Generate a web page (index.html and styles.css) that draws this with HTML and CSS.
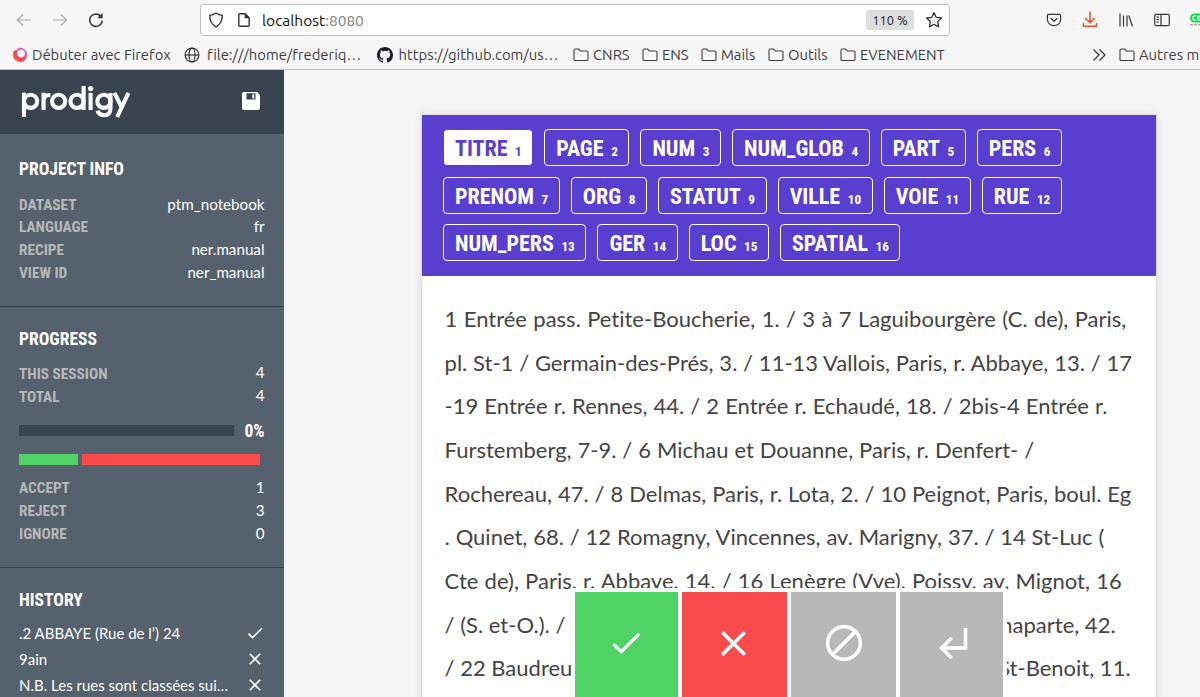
FILE: index.html
```
<!DOCTYPE html>
<html lang="fr">
<head>
<meta charset="utf-8">
<title>Prodigy</title>
<link rel="stylesheet" href="styles.css">
</head>
<body>
<svg class="defs" width="0" height="0">
  <symbol id="folder" viewBox="0 0 16 16"><path d="M1 12.5V3.3Q1 2 2.3 2H5.5L7.4 4H13.7Q15 4 15 5.3V12.2Q15 13.5 13.7 13.5H2.3Q1 13.5 1 12.5Z" fill="none" stroke="#3d3d3f" stroke-width="1.1"/></symbol>
  <symbol id="check" viewBox="0 0 24 24"><path d="M9 16.17L4.83 12l-1.42 1.41L9 19 21 7l-1.41-1.41z" fill="#fff"/></symbol>
  <symbol id="cross" viewBox="0 0 24 24"><path d="M19 6.41L17.59 5 12 10.59 6.41 5 5 6.41 10.59 12 5 17.59 6.41 19 12 13.41 17.59 19 19 17.59 13.41 12z" fill="#fff"/></symbol>
</svg>
<header class="browser">
  <div class="toolbar">
    <div class="nav">
      <svg width="16" height="16" viewBox="0 0 16 16" class="dim"><path d="M15 8H1.5M7 2.5L1.5 8 7 13.5"/></svg>
      <svg width="16" height="16" viewBox="0 0 16 16" class="dim"><path d="M1 8H14.5M9 2.5L14.5 8 9 13.5"/></svg>
      <svg width="16" height="16" viewBox="0 0 16 16" class="ink"><path d="M13.2 4.6A6.3 6.3 0 1 0 14.3 8.6" stroke-width="1.5"/><path d="M14.6 1V6.3H9.3Z" fill="#333" stroke="none"/></svg>
    </div>
    <div class="urlbar">
      <svg width="16" height="16" viewBox="0 0 16 16" class="ink"><path d="M8 1Q10.8 3 14.2 3.4Q14.6 11 8 15Q1.4 11 1.8 3.4Q5.2 3 8 1Z" stroke-width="1.4"/></svg>
      <svg width="16" height="16" viewBox="0 0 16 16" class="ink page"><path d="M3.8 1.7H9L13.2 5.9V13.3Q13.2 14.3 12.2 14.3H3.8Q2.8 14.3 2.8 13.3V2.7Q2.8 1.7 3.8 1.7Z" stroke-width="1.4"/><path d="M8.6 1.4V6.3H13.4Z" fill="#333" stroke="none"/></svg>
      <span class="url">localhost<span>:8080</span></span>
      <span class="zoom">110 %</span>
      <svg width="18" height="18" viewBox="0 0 18 18" class="ink"><path d="M9 1.6L11.2 6.3 16.5 7 12.7 10.6 13.6 15.9 9 13.3 4.4 15.9 5.3 10.6 1.5 7 6.8 6.3Z" stroke-width="1.3" stroke-linejoin="round"/></svg>
    </div>
    <div class="tools">
      <svg width="16" height="16" viewBox="0 0 16 16" class="ink"><path d="M2.5 2.3H13.5Q14.6 2.3 14.6 3.5V7.5A6.6 6.2 0 0 1 1.4 7.5V3.5Q1.4 2.3 2.5 2.3ZM4.7 6.2L8 9.2 11.3 6.2"/></svg>
      <svg width="16" height="18" viewBox="0 0 16 18" class="orange"><path d="M8 1V11.5M3.8 7.5L8 11.7 12.2 7.5M1.5 12.5V15.2H14.5V12.5"/></svg>
      <svg width="16" height="16" viewBox="0 0 16 16" class="ink"><path d="M2 1.5V14.5M5.5 3.5V14.5M9 3.5V14.5M10.8 3.5L14.5 14.5" stroke-width="1.2"/></svg>
      <svg width="16" height="16" viewBox="0 0 16 16" class="ink"><rect x="0.7" y="2.3" width="14.6" height="11.4" rx="1.5"/><path d="M7 2.3V13.7M2.5 5H5M2.5 7.5H5M2.5 10H5"/></svg>
      <svg width="11" height="16" viewBox="0 0 11 16" class="ext"><rect x="0" y="1.5" width="20" height="9" rx="4.5" fill="#08e04a"/><path d="M6 4Q2.6 3.5 2.7 6Q2.8 8.5 6 8M11 4H8V8H11M8 6H11" fill="none" stroke="#fff" stroke-width="1.2"/><path d="M0 12.8H11" stroke="#888" stroke-dasharray="3 1"/></svg>
    </div>
  </div>
  <nav class="bookmarks">
    <a class="b1"><svg width="16" height="16" viewBox="0 0 16 16"><defs><linearGradient id="fx" x1="1" y1="0" x2="0" y2="1"><stop offset="0" stop-color="#9059ff"/><stop offset=".35" stop-color="#ff4aa2"/><stop offset=".65" stop-color="#ff3750"/><stop offset="1" stop-color="#ffbd2b"/></linearGradient></defs><path fill-rule="evenodd" d="M8 .8A7.2 7.2 0 1 1 .8 8Q.9 4.6 3 2.8Q3.6 3.2 4.2 3.6Q5.8 .9 8 .8ZM9 2.4A4.1 4.1 0 1 0 9.01 2.4Z" fill="url(#fx)"/></svg><span>Débuter avec Firefox</span></a>
    <a class="b2"><svg width="16" height="16" viewBox="0 0 16 16" class="ink"><circle cx="8" cy="8" r="6.9"/><ellipse cx="8" cy="8" rx="3" ry="6.9"/><path d="M1.1 8H14.9"/></svg><span>file:///home/frederiq…</span></a>
    <a class="b3"><svg width="16" height="16" viewBox="0 0 16 16"><path fill="#1b1f23" d="M8 0C3.58 0 0 3.58 0 8c0 3.54 2.29 6.53 5.47 7.59.4.07.55-.17.55-.38v-1.49c-2.01.37-2.53-.49-2.69-.94-.09-.23-.48-.94-.82-1.13-.28-.15-.68-.52-.01-.53.63-.01 1.08.58 1.23.82.72 1.21 1.87.87 2.33.66.07-.52.28-.87.51-1.07-1.78-.2-3.64-.89-3.64-3.95 0-.87.31-1.59.82-2.15-.08-.2-.36-1.02.08-2.12 0 0 .67-.21 2.2.82a7.7 7.7 0 0 1 4 0c1.53-1.04 2.2-.82 2.2-.82.44 1.1.16 1.92.08 2.12.51.56.82 1.27.82 2.15 0 3.07-1.87 3.75-3.65 3.95.29.25.54.73.54 1.48v2.2c0 .21.15.46.55.38A8 8 0 0 0 16 8c0-4.42-3.58-8-8-8z"/></svg><span>https://github.com/us…</span></a>
    <a class="b4"><svg width="16" height="16"><use href="#folder"/></svg><span>CNRS</span></a>
    <a class="b5"><svg width="16" height="16"><use href="#folder"/></svg><span>ENS</span></a>
    <a class="b6"><svg width="16" height="16"><use href="#folder"/></svg><span>Mails</span></a>
    <a class="b7"><svg width="16" height="16"><use href="#folder"/></svg><span>Outils</span></a>
    <a class="b8"><svg width="16" height="16"><use href="#folder"/></svg><span>EVENEMENT</span></a>
    <a class="b9"><svg width="16" height="16" viewBox="0 0 16 16" class="ink"><path d="M2.5 2.5L8 8 2.5 13.5M8.5 2.5L14 8 8.5 13.5"/></svg></a>
    <a class="b10"><svg width="16" height="16"><use href="#folder"/></svg><span>Autres m</span></a>
  </nav>
</header>
<div class="app">
  <aside class="sidebar">
    <div class="brand">
      <svg class="logo" width="112" height="38" viewBox="0 0 112 38" fill="none" stroke="#fff" stroke-width="4.1">
        <path d="M4 9.7V34"/><circle cx="10.6" cy="18.3" r="6.6"/>
        <path d="M23.6 9.7V27M23.6 17.6Q23.8 11.6 30.4 12"/>
        <circle cx="38.6" cy="18.3" r="6.6"/>
        <circle cx="57" cy="18.3" r="6.6"/><path d="M63.6 3V27"/>
        <path d="M70.6 9.9V27"/><circle cx="70.6" cy="5.6" r="2.6" fill="#fff" stroke="none"/>
        <circle cx="83.9" cy="18.3" r="6.6"/><path d="M90.5 9.9V25.5Q90.3 32.2 84.2 32.2Q79 32.2 77.4 27.8"/>
        <path d="M94.4 9.9L101.6 24M108.4 9.9L97.2 34"/>
      </svg>
      <svg class="save" width="18" height="18" viewBox="0 0 18 18"><path d="M2 0H15L18 3V16Q18 18 16 18H2Q0 18 0 16V2Q0 0 2 0Z" fill="#fff"/><path d="M4.5 1.3H13.5V7.5H4.5Z" fill="#3a4350"/><path d="M10.3 2.3H12.3V6.5H10.3Z" fill="#fff"/></svg>
    </div>
    <section class="info">
      <h2>PROJECT INFO</h2>
      <dl>
        <div><dt>DATASET</dt><dd>ptm_notebook</dd></div>
        <div><dt>LANGUAGE</dt><dd>fr</dd></div>
        <div><dt>RECIPE</dt><dd>ner.manual</dd></div>
        <div><dt>VIEW ID</dt><dd>ner_manual</dd></div>
      </dl>
    </section>
    <section class="progress">
      <h2>PROGRESS</h2>
      <dl>
        <div><dt>THIS SESSION</dt><dd>4</dd></div>
        <div><dt>TOTAL</dt><dd>4</dd></div>
      </dl>
      <div class="meter"><i></i><b>0%</b></div>
      <div class="split"><i class="ok"></i><i class="ko"></i></div>
      <dl>
        <div><dt>ACCEPT</dt><dd>1</dd></div>
        <div><dt>REJECT</dt><dd>3</dd></div>
        <div><dt>IGNORE</dt><dd>0</dd></div>
      </dl>
    </section>
    <section class="history">
      <h2>HISTORY</h2>
      <ul>
        <li><span>.2 ABBAYE (Rue de l’) 24</span><svg width="20" height="20"><use href="#check"/></svg></li>
        <li><span>9ain</span><svg width="20" height="20"><use href="#cross"/></svg></li>
        <li><span>N.B. Les rues sont classées sui…</span><svg width="20" height="20"><use href="#cross"/></svg></li>
      </ul>
    </section>
  </aside>
  <main class="main">
    <article class="card">
      <div class="labels">
        <div class="row"><span class="label on">TITRE<small>1</small></span><span class="label">PAGE<small>2</small></span><span class="label">NUM<small>3</small></span><span class="label">NUM_GLOB<small>4</small></span><span class="label">PART<small>5</small></span><span class="label">PERS<small>6</small></span></div>
        <div class="row"><span class="label">PRENOM<small>7</small></span><span class="label">ORG<small>8</small></span><span class="label">STATUT<small>9</small></span><span class="label">VILLE<small>10</small></span><span class="label">VOIE<small>11</small></span><span class="label">RUE<small>12</small></span></div>
        <div class="row"><span class="label">NUM_PERS<small>13</small></span><span class="label">GER<small>14</small></span><span class="label">LOC<small>15</small></span><span class="label">SPATIAL<small>16</small></span></div>
      </div>
      <div class="text">
        <p class="l1">1 Entrée pass. Petite-Boucherie, 1. / 3 à 7 Laguibourgère (C. de), Paris,</p>
        <p class="l2">pl. St-1 / Germain-des-Prés, 3. / 11-13 Vallois, Paris, r. Abbaye, 13. / 17</p>
        <p class="l3">-19 Entrée r. Rennes, 44. / 2 Entrée r. Echaudé, 18. / 2bis-4 Entrée r.</p>
        <p class="l4">Furstemberg, 7-9. / 6 Michau et Douanne, Paris, r. Denfert- /</p>
        <p class="l5">Rochereau, 47. / 8 Delmas, Paris, r. Lota, 2. / 10 Peignot, Paris, boul. Eg</p>
        <p class="l6">. Quinet, 68. / 12 Romagny, Vincennes, av. Marigny, 37. / 14 St-Luc (</p>
        <p class="l7">Cte de), Paris, r. Abbaye, 14. / 16 Lenègre (Vve), Poissy, av. Mignot, 16</p>
        <p class="cut c1"><span>/ (S. et-O.). /</span><span>Bonaparte, 42.</span></p>
        <p class="cut c2"><span>/ 22 Baudreu</span><span>St-Benoit, 11.</span></p>
      </div>
    </article>
    <div class="actions">
      <button class="accept"><svg width="38" height="38"><use href="#check"/></svg></button>
      <button class="reject"><svg width="43" height="43"><use href="#cross"/></svg></button>
      <button class="ignore"><svg width="38" height="38" viewBox="0 0 38 38"><circle cx="19" cy="19" r="16.3" fill="none" stroke="#fff" stroke-width="3.6"/><path d="M7.8 30.2L30.2 7.8" stroke="#fff" stroke-width="3.6"/></svg></button>
      <button class="undo"><svg width="30" height="34" viewBox="0 0 30 34"><path d="M26.5 2V22H3M12.5 12L2.6 22 12.5 32" fill="none" stroke="#fff" stroke-width="3.5"/></svg></button>
    </div>
  </main>
</div>
</body>
</html>
```
FILE: styles.css
```
* { box-sizing: border-box; }
html, body { margin: 0; height: 697px; overflow: hidden; background: #f5f5f5; }
body { font-family: Lato, sans-serif; font-variant-ligatures: none; display: flex; flex-direction: column; }
h2, p, dl, dd, ul { margin: 0; padding: 0; }
svg { display: block; flex: none; }
.defs { position: absolute; }

.browser { height: 70px; background: #f7f7f8; border-bottom: 1px solid #c2c2c2; font-family: Ubuntu, "Noto Sans", sans-serif; color: #3d3d3f; flex: none; overflow: hidden; }
.dim { fill: none; stroke: #a9a9aa; stroke-width: 1.2; }
.ink { fill: none; stroke: #333; stroke-width: 1.2; }
.orange { fill: none; stroke: #e8562a; stroke-width: 1.6; stroke-linecap: round; stroke-linejoin: round; }
.toolbar { height: 40px; display: flex; align-items: center; }
.nav { width: 200px; padding-left: 16px; display: flex; gap: 20px; }
.urlbar { width: 750px; height: 32px; border: 1px solid #bdbdbe; border-radius: 4px; background: #fff; display: flex; align-items: center; padding: 0 6px 0 7px; }
.page { margin-left: 12px; }
.url { margin-left: 10px; flex: 1; font-size: 15.5px; color: #111; padding-top: 1px; }
.url span { color: #808080; }
.zoom { width: 48px; height: 20px; line-height: 21px; text-align: center; background: #dedede; border-radius: 3px; font-size: 12.8px; color: #222; margin-right: 11px; }
.tools { margin-left: 96px; display: flex; align-items: center; gap: 20px; width: 154px; overflow: hidden; }
.bookmarks { height: 29px; display: flex; align-items: center; padding-left: 12px; font-size: 14.8px; line-height: 29px; white-space: nowrap; }
.bookmarks a { display: flex; align-items: center; gap: 4px; flex: none; }
.b1 { width: 172px; }
.b2 { width: 193px; }
.bookmarks .b2 { gap: 7px; }
.bookmarks .b3 { gap: 5.5px; }
.b3 { width: 196px; }
.b4 { width: 69px; }
.b5 { width: 59px; }
.b6 { width: 67px; }
.b7 { width: 72px; }
.b8 { width: 251px; }
.b9 { width: 28px; }

.app { display: flex; flex: 1; min-height: 0; }
.sidebar { width: 284px; background: #56616e; color: #fff; flex: none; overflow: hidden; }
.brand { height: 64px; background: #3a4451; display: flex; align-items: center; justify-content: space-between; padding: 0 24px 0 20px; }
.save { margin-top: -2px; }
.sidebar section { padding: 20px 19.5px 0 19px; border-bottom: 1px solid #3a4451; }
.sidebar h2, .sidebar dt, .meter b, .label { font-family: "Roboto Condensed", Roboto, sans-serif; font-stretch: 75%; font-weight: 700; }
.sidebar h2 { font-size: 17.6px; line-height: 24px; margin-bottom: 12px; }
.sidebar dl div { display: flex; justify-content: space-between; height: 22.9px; line-height: 22.9px; }
.sidebar dt { font-size: 15.3px; color: #b8b8b8; }
.sidebar dd { font-size: 15.2px; line-height: 20.9px; }
.sidebar .info { height: 173px; padding-top: 23px; }
.info h2 { margin-bottom: 12.6px; }
.progress { height: 261px; }
.progress dd { line-height: 19.9px; }
.meter { display: flex; justify-content: space-between; align-items: center; margin-top: 11px; height: 22px; font-size: 17.6px; }
.meter i { width: 215px; height: 11px; background: #3a4451; }
.split { display: flex; gap: 4px; margin: 12px 0 12px; }
.split i { height: 11px; }
.ok { width: 59px; background: #4fd364; }
.ko { width: 178px; background: #f94b4b; }
.split + dl dd { line-height: 21.9px; }
.sidebar .history h2 { margin-bottom: 8px; }
.history ul { list-style: none; }
.history li { display: flex; justify-content: space-between; align-items: center; height: 26px; font-size: 15px; white-space: nowrap; }

.main { flex: 1; padding: 45px 0 0 138px; position: relative; overflow: hidden; }
.card { width: 734px; height: 640px; background: #fff; box-shadow: 0 0 0 1px #dcdcdc, 0 0 10px rgba(0,0,0,.1); }
.labels { height: 161px; background: #583fcf; padding: 14px 21px; display: flex; flex-direction: column; gap: 10.6px; }
.row { display: flex; gap: 11.1px; }
.label { height: 37px; border: 1px solid #fff; border-radius: 4px; color: #fff; font-size: 22px; line-height: 37px; padding: 0 10.5px 0 11px; display: flex; align-items: baseline; white-space: nowrap; }
.label small { font-size: 13.2px; margin-left: 7.6px; }
.label.on { background: #fff; color: #583fcf; border-color: #583fcf; }
.text { padding: 21.2px 23px 0 22.6px; color: #444; font-size: 22px; line-height: 43.65px; }
.text p { height: 43.65px; white-space: nowrap; }
.l1 { word-spacing: .75px; }
.l2 { word-spacing: .17px; }
.l3 { word-spacing: .45px; }
.l4 { word-spacing: .3px; }
.l5 { word-spacing: .35px; }
.l6 { word-spacing: .22px; }
.l7 { word-spacing: .57px; }
.cut { display: flex; justify-content: space-between; }
.c1 { width: 671px; }
.c2 { width: 686px; }

.actions { position: absolute; left: 287px; top: 518px; width: 436px; height: 109px; background: #fff; padding: 4px 4px 0; display: flex; gap: 4px; }
.actions button { border: 0; padding: 0 0 3px; height: 105px; display: flex; align-items: center; justify-content: center; }
.actions .accept { width: 103px; background: #4fd364; padding-right: 2px; }
.actions .reject { width: 105px; background: #f94b4b; padding-right: 2px; }
.ignore { width: 105px; background: #b8b8b8; }
.actions .undo { width: 103px; background: #b8b8b8; padding-left: 4px; }
```
